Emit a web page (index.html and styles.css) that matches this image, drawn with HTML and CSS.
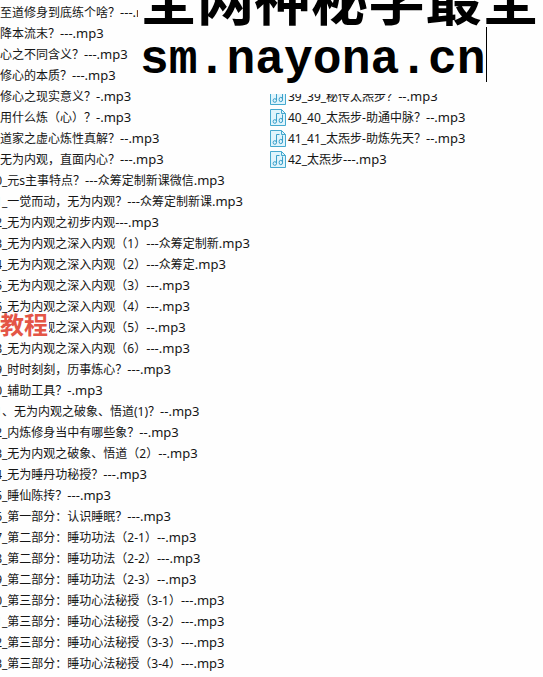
FILE: index.html
```html
<!DOCTYPE html>
<html lang="zh-CN">
<head>
  <meta charset="UTF-8">
  <meta name="viewport" content="width=device-width, initial-scale=1.0">
  <title>sm.nayona.cn</title>
  <link rel="stylesheet" href="styles.css">
</head>
<body>

  <svg class="sprite" aria-hidden="true">
    <symbol id="music" viewBox="0 0 16 17">
      <path d="M.5 .5H11.5L15.5 4.500V16.500H.5Z" fill="#dff4fc" stroke="#45a9cf"/>
      <path d="M11.500 .5V4.500H15.500" fill="none" stroke="#45a9cf"/>
      <path d="M6.500 12.500V4.500H9.500M12.500 12.500V5.500" fill="none" stroke="#3a9fc9"/>
      <ellipse cx="4.800" cy="12.500" rx="1.700" ry="1.800" fill="none" stroke="#3a9fc9"/>
      <ellipse cx="10.800" cy="11.500" rx="1.700" ry="2.200" fill="none" stroke="#3a9fc9"/>
    </symbol>
  </svg>

  <main class="files">
    <ul class="list">
      <li>至道修身到底练个啥？<span class="ext">---.mp3</span></li>
      <li>降本流末？<span class="ext">---.mp3</span></li>
      <li>心之不同含义？<span class="ext">---.mp3</span></li>
      <li>修心的本质？<span class="ext">---.mp3</span></li>
      <li>修心之现实意义？<span class="ext">-.mp3</span></li>
      <li>用什么炼（心）？<span class="ext">-.mp3</span></li>
      <li>道家之虚心炼性真解？<span class="ext">--.mp3</span></li>
      <li>无为内观，直面内心？<span class="ext">---.mp3</span></li>
      <li><span class="num">10</span>_元s主事特点？<span class="ext">---</span>众筹定制新课微信<span class="ext">.mp3</span></li>
      <li><span class="num">11</span>_一觉而动，无为内观？<span class="ext">---</span>众筹定制新课<span class="ext">.mp3</span></li>
      <li><span class="num">12</span>_无为内观之初步内观<span class="ext">---.mp3</span></li>
      <li><span class="num">13</span>_无为内观之深入内观（1）<span class="ext">---</span>众筹定制新<span class="ext">.mp3</span></li>
      <li><span class="num">14</span>_无为内观之深入内观（2）<span class="ext">---</span>众筹定<span class="ext">.mp3</span></li>
      <li><span class="num">15</span>_无为内观之深入内观（3）<span class="ext">---.mp3</span></li>
      <li><span class="num">16</span>_无为内观之深入内观（4）<span class="ext">---.mp3</span></li>
      <li><span class="num">17</span>_无为内观之深入内观（5）<span class="ext">--.mp3</span><strong class="stamp">教程</strong></li>
      <li><span class="num">18</span>_无为内观之深入内观（6）<span class="ext">---.mp3</span></li>
      <li><span class="num">19</span>_时时刻刻，历事炼心？<span class="ext">---.mp3</span></li>
      <li><span class="num">20</span>_辅助工具？<span class="ext">-.mp3</span></li>
      <li><span class="num">21</span>、无为内观之破象、悟道(1)？<span class="ext">--.mp3</span></li>
      <li><span class="num">22</span>_内炼修身当中有哪些象？<span class="ext">--.mp3</span></li>
      <li><span class="num">23</span>_无为内观之破象、悟道（2）<span class="ext">--.mp3</span></li>
      <li><span class="num">24</span>_无为睡丹功秘授？<span class="ext">---.mp3</span></li>
      <li><span class="num">25</span>_睡仙陈抟？<span class="ext">---.mp3</span></li>
      <li><span class="num">26</span>_第一部分：认识睡眠？<span class="ext">---.mp3</span></li>
      <li><span class="num">27</span>_第二部分：睡功功法（2-1）<span class="ext">--.mp3</span></li>
      <li><span class="num">28</span>_第二部分：睡功功法（2-2）<span class="ext">---.mp3</span></li>
      <li><span class="num">29</span>_第二部分：睡功功法（2-3）<span class="ext">--.mp3</span></li>
      <li><span class="num">30</span>_第三部分：睡功心法秘授（3-1）<span class="ext">---.mp3</span></li>
      <li><span class="num">31</span>_第三部分：睡功心法秘授（3-2）<span class="ext">---.mp3</span></li>
      <li><span class="num">32</span>_第三部分：睡功心法秘授（3-3）<span class="ext">---.mp3</span></li>
      <li><span class="num">33</span>_第三部分：睡功心法秘授（3-4）<span class="ext">---.mp3</span></li>
    </ul>

    <ul class="list list-right">
      <li><svg class="icon"><use href="#music"/></svg>39_39_秘传太炁步？<span class="ext">--.mp3</span></li>
      <li><svg class="icon"><use href="#music"/></svg>40_40_太炁步-助通中脉？<span class="ext">--.mp3</span></li>
      <li><svg class="icon"><use href="#music"/></svg>41_41_太炁步-助炼先天？<span class="ext">--.mp3</span></li>
      <li><svg class="icon"><use href="#music"/></svg>42_太炁步<span class="ext">---.mp3</span></li>
    </ul>
  </main>

  <div class="banner">
    <h1>全网神秘学最全</h1>
    <p>sm.nayona.cn<span class="caret"></span></p>
  </div>

</body>
</html>
```
FILE: styles.css
```css
body {
  margin: 0;
  position: relative;
  overflow: hidden;
  background: #fefefe;
  color: #151515;
  font-family: "Noto Sans", "Noto Sans CJK SC", sans-serif;
  font-size: 12px;
}
.sprite {
  display: none;
}
.files {
  display: grid;
  grid-template-columns: 270px 1fr;
  padding: 2px 0 3px;
}
.list {
  list-style: none;
  margin: 0;
  padding: 0;
}
.list li {
  display: flex;
  align-items: baseline;
  position: relative;
  height: 21px;
  line-height: 21px;
  white-space: nowrap;
}
.ext {
  font-size: 13px;
}
/* only the edge of the last digit shows */
.num {
  display: flex;
  justify-content: flex-end;
  width: 2px;
  overflow: hidden;
}
.list-right {
  padding-top: 84px;
}
.icon {
  align-self: center;
  width: 16px;
  height: 17px;
  margin-right: 2px;
}
.stamp {
  position: absolute;
  top: -3px;
  left: 0;
  width: 49px;
  height: 24px;
  line-height: 22px;
  background: #fefefe;
  color: #e45546;
  font-size: 24px;
}
.banner {
  position: absolute;
  top: 0;
  left: 138px;
  right: 0;
  height: 94px;
  padding-left: 2px;
  box-sizing: border-box;
  display: flex;
  flex-direction: column;
  justify-content: flex-end;
  overflow: hidden;
  background: #fefefe;
  color: #000;
  white-space: nowrap;
}
.banner h1 {
  margin: 0;
  padding-bottom: 3px;
  font-family: "Noto Sans CJK SC", sans-serif;
  font-size: 57px;
  line-height: 57px;
}
.banner p {
  display: flex;
  margin: 0;
  font-family: "Liberation Mono", monospace;
  font-size: 48px;
  font-weight: bold;
  line-height: 67px;
}
.caret {
  width: 1px;
  height: 55px;
  background: #000;
}
```
